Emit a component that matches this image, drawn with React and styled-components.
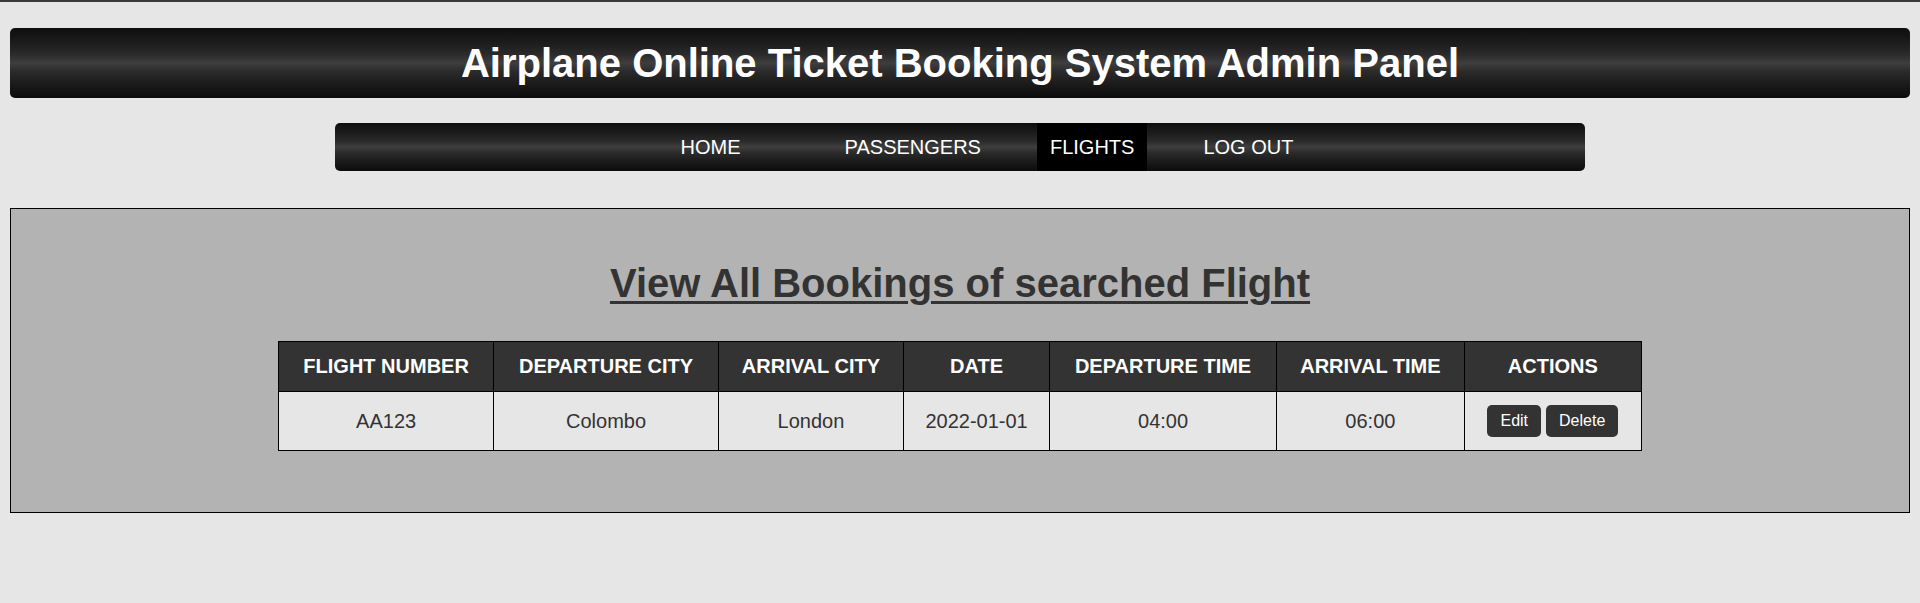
import React from "react";
import styled, { createGlobalStyle } from "styled-components";

const GlobalStyle = createGlobalStyle`
  html, body {
    margin: 0;
    padding: 0;
    background-color: #e6e6e6;
    font-family: "Liberation Sans", Arial, sans-serif;
  }
`;

const barGradient = `
  linear-gradient(
    to bottom,
    #0e0e0e 0%,
    #1d1d1d 22%,
    #2b2b2b 38%,
    #3e3e3e 50%,
    #2b2b2b 62%,
    #1b1b1b 80%,
    #0b0b0b 100%
  )
`;

const Page = styled.div`
  min-height: 603px;
  border-top: 2px solid #3a3a3a;
  padding: 0 10px;
  box-sizing: border-box;
  display: flex;
  flex-direction: column;
  align-items: center;
`;

const Header = styled.header`
  width: 100%;
  margin-top: 26px;
  height: 70px;
  border-radius: 5px;
  background: ${barGradient};
  display: flex;
  align-items: center;
  justify-content: center;
`;

const Title = styled.h1`
  margin: 0;
  font-size: 40px;
  font-weight: bold;
  line-height: 46px;
  color: #ffffff;
`;

const Nav = styled.nav`
  width: 1250px;
  height: 48px;
  margin-top: 25px;
  padding-left: 54px;
  box-sizing: border-box;
  border-radius: 5px;
  background: ${barGradient};
  display: flex;
  justify-content: center;
  gap: 43px;
`;

const NavLink = styled.a`
  display: block;
  padding: 0 13px;
  margin-right: ${props => (props.extra ? "35px" : "0")};
  line-height: 48px;
  font-size: 20px;
  color: #ffffff;
  text-decoration: none;
  background-color: ${props => (props.active ? "#000000" : "transparent")};
`;

const Panel = styled.section`
  width: 100%;
  margin-top: 37px;
  padding: 51px 0 61px;
  box-sizing: border-box;
  background-color: #b3b3b3;
  border: 1px solid #000000;
  display: flex;
  flex-direction: column;
  align-items: center;
`;

const Heading = styled.h2`
  margin: 0 0 35px;
  font-size: 40px;
  line-height: 46px;
  font-weight: bold;
  color: #333333;
  text-decoration: underline;
  text-decoration-thickness: 3px;
  text-underline-offset: 4px;
`;

const Table = styled.table`
  width: 1364px;
  border-collapse: collapse;
  font-size: 20px;
`;

const Th = styled.th`
  padding: 13px 15px;
  line-height: 23px;
  background-color: #333333;
  color: #ffffff;
  font-weight: bold;
  border: 1px solid #000000;
  white-space: nowrap;
`;

const Td = styled.td`
  padding: 13px 15px;
  line-height: 23px;
  background-color: #e6e6e6;
  color: #333333;
  text-align: center;
  border: 1px solid #000000;
  white-space: nowrap;
`;

const Actions = styled.div`
  display: flex;
  justify-content: center;
  gap: 5px;
`;

const Button = styled.button`
  padding: 7px 13px;
  font-family: "Liberation Sans", Arial, sans-serif;
  font-size: 16px;
  line-height: 18px;
  color: #ffffff;
  background-color: #333333;
  border: none;
  border-radius: 5px;
  cursor: pointer;
`;

const columns = [
  "FLIGHT NUMBER",
  "DEPARTURE CITY",
  "ARRIVAL CITY",
  "DATE",
  "DEPARTURE TIME",
  "ARRIVAL TIME",
  "ACTIONS"
];

const flights = [
  {
    number: "AA123",
    from: "Colombo",
    to: "London",
    date: "2022-01-01",
    departs: "04:00",
    arrives: "06:00"
  }
];

const App = () => (
  <>
    <GlobalStyle />
    <Page>
      <Header>
        <Title>Airplane Online Ticket Booking System Admin Panel</Title>
      </Header>
      <Nav>
        <NavLink href="#" extra>
          HOME
        </NavLink>
        <NavLink href="#">PASSENGERS</NavLink>
        <NavLink href="#" active>
          FLIGHTS
        </NavLink>
        <NavLink href="#">LOG OUT</NavLink>
      </Nav>
      <Panel>
        <Heading>View All Bookings of searched Flight</Heading>
        <Table>
          <thead>
            <tr>
              {columns.map(col => (
                <Th key={col}>{col}</Th>
              ))}
            </tr>
          </thead>
          <tbody>
            {flights.map(f => (
              <tr key={f.number}>
                <Td>{f.number}</Td>
                <Td>{f.from}</Td>
                <Td>{f.to}</Td>
                <Td>{f.date}</Td>
                <Td>{f.departs}</Td>
                <Td>{f.arrives}</Td>
                <Td>
                  <Actions>
                    <Button>Edit</Button>
                    <Button>Delete</Button>
                  </Actions>
                </Td>
              </tr>
            ))}
          </tbody>
        </Table>
      </Panel>
    </Page>
  </>
);

export default App;
